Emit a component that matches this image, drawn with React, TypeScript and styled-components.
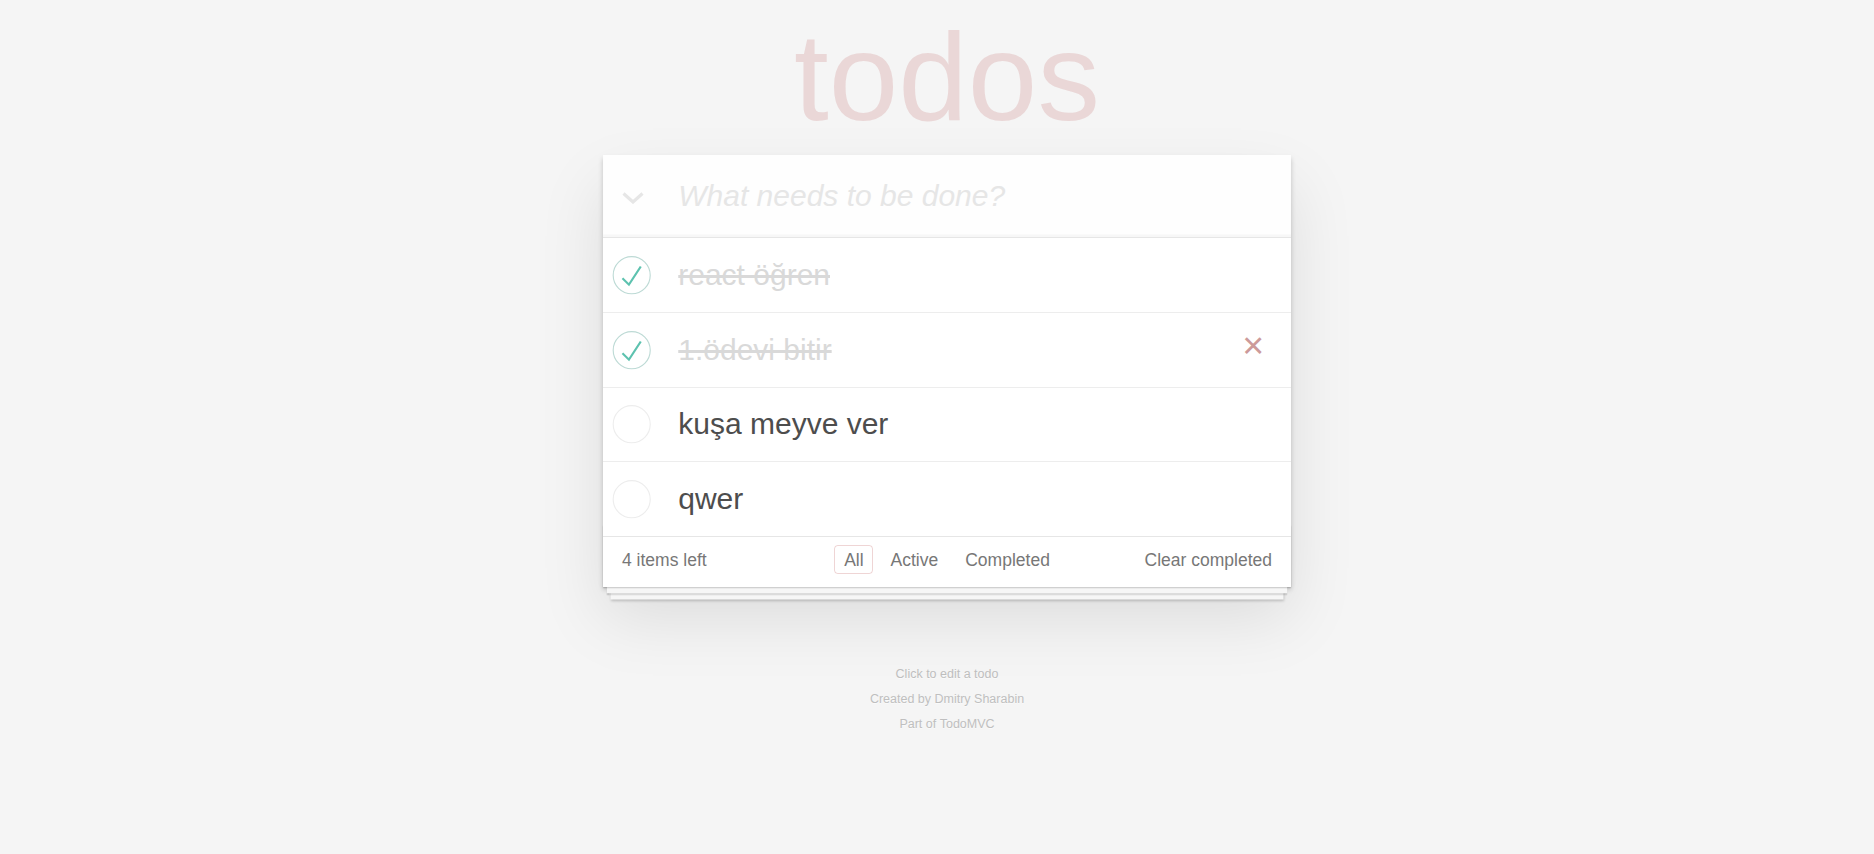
import React from 'react';
import styled, { createGlobalStyle } from 'styled-components';

const GlobalStyle = createGlobalStyle`
  html, body {
    margin: 0;
    padding: 0;
  }
  body {
    background: #f5f5f5;
    font-family: "Liberation Sans", Arial, Helvetica, sans-serif;
    font-weight: 300;
    font-size: 17.5px;
    line-height: 24.5px;
    color: #4d4d4d;
    -webkit-font-smoothing: antialiased;
  }
  * {
    box-sizing: border-box;
  }
`;

const Page = styled.div`
  padding: 14px 0 40px 20px;
`;

const Column = styled.div`
  width: 687.5px;
  margin: 0 auto;
`;

const Title = styled.h1`
  margin: 0 0 16px;
  font-size: 125px;
  line-height: 125px;
  font-weight: 100;
  text-align: center;
  color: rgba(175, 47, 47, 0.15);
  text-rendering: optimizeLegibility;
`;

const TodoApp = styled.section`
  position: relative;
  background: #fff;
  box-shadow: 0 2.5px 5px 0 rgba(0, 0, 0, 0.2),
    0 31.25px 62.5px 0 rgba(0, 0, 0, 0.1);
`;

const Header = styled.header`
  display: flex;
  height: 82px;
  background: rgba(0, 0, 0, 0.003);
  box-shadow: inset 0 -2.5px 1.25px rgba(0, 0, 0, 0.03);
`;

const ToggleAll = styled.label`
  flex: none;
  width: 60px;
  display: flex;
  align-items: center;
  justify-content: center;
  padding-top: 3px;
  cursor: pointer;
`;

const NewTodo = styled.input`
  flex: 1;
  min-width: 0;
  margin: 0;
  border: none;
  padding: 20px 20px 20px 15px;
  font-family: inherit;
  font-weight: inherit;
  font-size: 30px;
  line-height: 42px;
  color: inherit;
  background: transparent;
  outline: none;

  &::placeholder {
    font-style: italic;
    font-weight: 300;
    color: #e6e6e6;
  }
`;

const Main = styled.section`
  position: relative;
  z-index: 2;
  border-top: 1px solid #e6e6e6;
`;

const TodoList = styled.ul`
  margin: 0;
  padding: 0;
  list-style: none;
`;

const Item = styled.li`
  display: flex;
  align-items: center;
  font-size: 30px;
  border-bottom: 1px solid #ededed;

  &:last-child {
    border-bottom: none;
  }
`;

const ToggleBox = styled.span`
  flex: none;
  display: block;
  width: 50px;
  height: 50px;

  svg {
    display: block;
  }
`;

const ItemLabel = styled.label<{ $done: boolean }>`
  flex: 1;
  min-width: 0;
  display: block;
  padding: 18.875px 18.75px 18.875px 25px;
  line-height: 1.2;
  word-break: break-all;
  color: ${(p) => (p.$done ? '#d9d9d9' : '#4d4d4d')};
  text-decoration: ${(p) => (p.$done ? 'line-through' : 'none')};
`;

const Destroy = styled.button<{ $visible: boolean }>`
  flex: none;
  width: 50px;
  height: 50px;
  margin: 0 12.5px 9.5px 0;
  padding: 0;
  border: 0;
  background: none;
  font-family: inherit;
  font-size: 37.5px;
  line-height: 50px;
  color: #cc9a9a;
  cursor: pointer;
  visibility: ${(p) => (p.$visible ? 'visible' : 'hidden')};
`;

const Footer = styled.footer`
  position: relative;
  display: grid;
  grid-template-columns: 1fr auto 1fr;
  align-items: center;
  height: 51px;
  padding: 10.5px 18.75px 14.5px;
  border-top: 1px solid #e6e6e6;
  color: #777;
  font-size: 17.5px;
  line-height: 25px;

  &::before {
    content: '';
    position: absolute;
    right: 0;
    bottom: 0;
    left: 0;
    height: 62.5px;
    overflow: hidden;
    box-shadow: 0 1.25px 1.25px rgba(0, 0, 0, 0.2),
      0 10px 0 -3.75px #f6f6f6,
      0 11.25px 1.25px -3.75px rgba(0, 0, 0, 0.2),
      0 20px 0 -7.5px #f6f6f6,
      0 21.25px 2.5px -7.5px rgba(0, 0, 0, 0.2);
    pointer-events: none;
  }
`;

const Count = styled.span`
  justify-self: start;
  text-align: left;
`;

const Filters = styled.ul`
  display: flex;
  margin: 0;
  padding: 0;
  list-style: none;
`;

const FilterItem = styled.li`
  display: block;
`;

const FilterLink = styled.a<{ $selected: boolean }>`
  margin: 3.75px;
  padding: 3.75px 8.75px;
  color: inherit;
  text-decoration: none;
  border: 1px solid
    ${(p) => (p.$selected ? 'rgba(175, 47, 47, 0.2)' : 'transparent')};
  border-radius: 3.75px;
  cursor: pointer;
`;

const ClearCompleted = styled.button`
  justify-self: end;
  margin: 0;
  padding: 0;
  border: 0;
  background: none;
  font-family: inherit;
  font-weight: inherit;
  font-size: inherit;
  line-height: 25px;
  color: inherit;
  cursor: pointer;
`;

const Info = styled.footer`
  margin-top: 81.25px;
  color: #bfbfbf;
  font-size: 12.5px;
  line-height: 12.5px;
  text-shadow: 0 1.25px 0 rgba(255, 255, 255, 0.5);
  text-align: center;
`;

const InfoLine = styled.p`
  margin: 12.5px 0;
  line-height: 12.5px;
`;

const InfoLink = styled.a`
  color: inherit;
  text-decoration: none;
  font-weight: 400;
`;

const Chevron = () => (
  <svg width="22" height="12" viewBox="0 0 22 12" aria-hidden="true">
    <polyline
      points="1.5,1.5 11,10 20.5,1.5"
      fill="none"
      stroke="#e6e6e6"
      strokeWidth="3.2"
    />
  </svg>
);

const CheckCircle = ({ done }: { done: boolean }) => (
  <svg width="50" height="50" viewBox="-10 -18 100 135" aria-hidden="true">
    <circle
      cx="50"
      cy="50"
      r="50"
      fill="none"
      stroke={done ? '#bddad5' : '#ededed'}
      strokeWidth="3"
    />
    {done && <path fill="#5dc2af" d="M72 25L42 71 27 56l-4 4 20 20 34-52z" />}
  </svg>
);

type Todo = { id: number; title: string; done: boolean; hovered?: boolean };

const todos: Todo[] = [
  { id: 1, title: 'react öğren', done: true },
  { id: 2, title: '1.ödevi bitir', done: true, hovered: true },
  { id: 3, title: 'kuşa meyve ver', done: false },
  { id: 4, title: 'qwer', done: false },
];

const filters = ['All', 'Active', 'Completed'];

export default function App() {
  return (
    <>
      <GlobalStyle />
      <Page>
        <Column>
          <Title>todos</Title>
          <TodoApp>
            <Header>
              <ToggleAll>
                <Chevron />
              </ToggleAll>
              <NewTodo placeholder="What needs to be done?" />
            </Header>
            <Main>
              <TodoList>
                {todos.map((t) => (
                  <Item key={t.id}>
                    <ToggleBox>
                      <CheckCircle done={t.done} />
                    </ToggleBox>
                    <ItemLabel $done={t.done}>{t.title}</ItemLabel>
                    <Destroy $visible={!!t.hovered}>×</Destroy>
                  </Item>
                ))}
              </TodoList>
            </Main>
            <Footer>
              <Count>4 items left</Count>
              <Filters>
                {filters.map((f) => (
                  <FilterItem key={f}>
                    <FilterLink $selected={f === 'All'}>{f}</FilterLink>
                  </FilterItem>
                ))}
              </Filters>
              <ClearCompleted>Clear completed</ClearCompleted>
            </Footer>
          </TodoApp>
          <Info>
            <InfoLine>Click to edit a todo</InfoLine>
            <InfoLine>
              Created by <InfoLink>Dmitry Sharabin</InfoLink>
            </InfoLine>
            <InfoLine>
              Part of <InfoLink>TodoMVC</InfoLink>
            </InfoLine>
          </Info>
        </Column>
      </Page>
    </>
  );
}
